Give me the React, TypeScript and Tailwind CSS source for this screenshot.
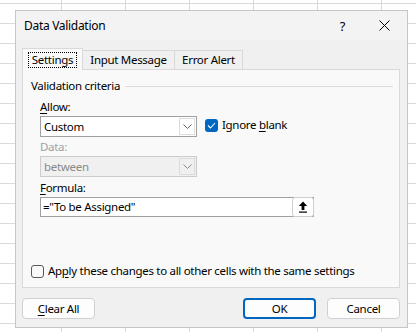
import React from "react";

function Chevron({ color = "#606060" }: { color?: string }) {
  return (
    <svg width="9" height="5" viewBox="0 0 9 5" fill="none">
      <path d="M0.5 0.5 L4.5 4.5 L8.5 0.5" stroke={color} strokeWidth="1" />
    </svg>
  );
}

function SelectBox({ value, disabled }: { value: string; disabled?: boolean }) {
  return (
    <div
      className={
        "flex h-[21px] w-[157px] items-stretch border " +
        (disabled ? "border-[#cccccc] bg-[#f0f0f0] text-[#8a8a8a]" : "border-[#a0a0a0] bg-white text-black")
      }
    >
      <div className="flex flex-1 items-center pl-[3px] leading-[16px]">{value}</div>
      <div
        className={
          "m-px flex w-[16px] items-center justify-center border " +
          (disabled ? "border-[#dcdcdc] bg-[#f0f0f0]" : "border-[#dcdcdc] bg-white")
        }
      >
        <Chevron color={disabled ? "#8a8a8a" : "#606060"} />
      </div>
    </div>
  );
}

export default function App() {
  return (
    <div
      className="relative h-[332px] w-[416px] overflow-hidden bg-white text-[11.5px] text-black"
      style={{ fontFamily: '"Noto Sans", "Open Sans", sans-serif' }}
    >
      <div className="absolute inset-0 bg-[linear-gradient(to_right,#dadada_1px,transparent_1px),linear-gradient(to_bottom,#dadada_1px,transparent_1px)] bg-[size:64px_20px] bg-[position:61px_3px]" />

      <div className="absolute left-[15px] top-[10px] flex h-[318px] w-[393px] flex-col border border-[#c6c6c6] bg-[#f0f0f0] tracking-[-0.3px]">
        {/* title bar */}
        <div className="flex h-[29px] items-center bg-[#f3f3f3] pl-[8px]">
          <span className="text-[12px] leading-[16px]">Data Validation</span>
          <span className="ml-auto mr-[34px] text-[13px] leading-[16px]">?</span>
          <svg className="mr-[17px]" width="11" height="11" viewBox="0 0 11 11">
            <path d="M0.5 0.5 L10.5 10.5 M10.5 0.5 L0.5 10.5" stroke="#000" strokeWidth="1" />
          </svg>
        </div>

        {/* tabs */}
        <div className="relative z-10 ml-[6px] mt-[8px] flex h-[21px] items-end">
          <div className="-mb-px flex h-[22px] w-[61px] items-start justify-center border border-b-0 border-[#d9d9d9] bg-[#f9f9f9] pt-[3px]">
            <span className="border border-dotted border-black px-[3px] leading-[14px]">Settings</span>
          </div>
          <div className="flex h-[19px] w-[92px] items-center justify-center border border-b-0 border-l-0 border-[#d9d9d9] bg-[#f0f0f0] leading-[16px]">
            Input Message
          </div>
          <div className="flex h-[19px] w-[68px] items-center justify-center border border-b-0 border-l-0 border-[#d9d9d9] bg-[#f0f0f0] leading-[16px]">
            Error Alert
          </div>
        </div>

        {/* panel */}
        <div className="ml-[6px] flex h-[219px] w-[378px] flex-col border border-[#d9d9d9] bg-[#f9f9f9] pl-[8px]">
          <div className="mt-[8px] flex h-[16px] items-center">
            <span className="leading-[16px]">Validation criteria</span>
            <div className="ml-[5px] mr-[6px] h-px flex-1 bg-[#dcdcdc]" />
          </div>

          <div className="ml-[9px] flex flex-col">
            <div className="mt-[5px] h-[16px] leading-[16px]">
              <span className="underline underline-offset-2">A</span>llow:
            </div>
            <div className="mt-px flex items-start">
              <SelectBox value="Custom" />
              <div className="ml-[8px] mt-px flex items-center">
                <div className="flex h-[13px] w-[13px] items-center justify-center rounded-[3px] bg-[#0067c0]">
                  <svg width="9" height="7" viewBox="0 0 9 7" fill="none">
                    <path d="M1 3.5 L3.5 6 L8 1" stroke="#fff" strokeWidth="1.1" />
                  </svg>
                </div>
                <span className="ml-[4px] leading-[16px]">
                  Ignore <span className="underline underline-offset-2">b</span>lank
                </span>
              </div>
            </div>

            <div className="mt-[2px] h-[16px] leading-[16px] text-[#a0a0a0]">Data:</div>
            <div className="mt-px">
              <SelectBox value="between" disabled />
            </div>

            <div className="mt-[3px] h-[16px] leading-[16px]">
              <span className="underline underline-offset-2">F</span>ormula:
            </div>
            <div className="mt-px flex h-[20px] w-[274px] items-stretch border border-[#a0a0a0] bg-white">
              <div className="flex flex-1 items-center pl-[2px] leading-[16px]">="To be Assigned"</div>
              <div className="-my-px -mr-px flex w-[22px] items-center justify-center rounded-[3px] border border-[#cfcfcf] bg-white">
                <svg width="10" height="12" viewBox="0 0 10 12">
                  <path d="M5 0.5 L0.8 5 H3.6 V9 H6.4 V5 H9.2 Z" fill="#000" />
                  <rect x="1" y="10.5" width="8" height="1.2" fill="#000" />
                </svg>
              </div>
            </div>
          </div>

          <div className="mt-auto mb-[8px] flex h-[16px] items-center">
            <div className="h-[13px] w-[13px] rounded-[3px] border border-[#5a5a5a] bg-[#f9f9f9]" />
            <span className="ml-[4px] leading-[16px]">
              Ap<span className="underline underline-offset-2">p</span>ly these changes to all other cells with the same settings
            </span>
          </div>
        </div>

        {/* buttons */}
        <div className="ml-[6px] mt-[10px] flex h-[21px] w-[378px] items-stretch">
          <div className="flex w-[73px] items-center justify-center rounded-[4px] border border-[#d0d0d0] bg-[#fdfdfd] leading-[16px]">
            <span>
              <span className="underline underline-offset-2">C</span>lear All
            </span>
          </div>
          <div className="ml-auto flex w-[73px] items-center justify-center rounded-[4px] border-2 border-[#0067c0] bg-[#fdfdfd] leading-[16px]">
            OK
          </div>
          <div className="ml-[11px] flex w-[73px] items-center justify-center rounded-[4px] border border-[#d0d0d0] bg-[#fdfdfd] leading-[16px]">
            Cancel
          </div>
        </div>
      </div>
    </div>
  );
}
